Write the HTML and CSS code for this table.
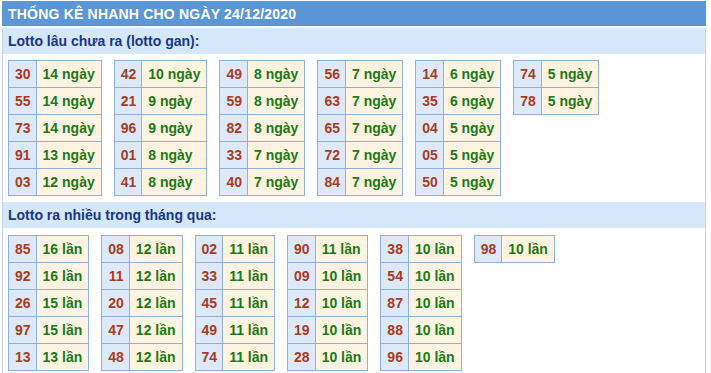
FILE: index.html
```html
<!DOCTYPE html>
<html lang="vi">
<head>
<meta charset="utf-8">
<title>Thống kê nhanh</title>
<link rel="stylesheet" href="styles.css">
</head>
<body>
<div class="wrap">
  <div class="title">THỐNG KÊ NHANH CHO NGÀY 24/12/2020</div>
  <div class="box">
    <div class="sec">Lotto lâu chưa ra (lotto gan):</div>
    <div class="grid">
      <table><tr><td class="n">30</td><td class="d">14 ngày</td></tr><tr><td class="n">55</td><td class="d">14 ngày</td></tr><tr><td class="n">73</td><td class="d">14 ngày</td></tr><tr><td class="n">91</td><td class="d">13 ngày</td></tr><tr><td class="n">03</td><td class="d">12 ngày</td></tr></table>
      <table><tr><td class="n">42</td><td class="d">10 ngày</td></tr><tr><td class="n">21</td><td class="d">9 ngày</td></tr><tr><td class="n">96</td><td class="d">9 ngày</td></tr><tr><td class="n">01</td><td class="d">8 ngày</td></tr><tr><td class="n">41</td><td class="d">8 ngày</td></tr></table>
      <table><tr><td class="n">49</td><td class="d">8 ngày</td></tr><tr><td class="n">59</td><td class="d">8 ngày</td></tr><tr><td class="n">82</td><td class="d">8 ngày</td></tr><tr><td class="n">33</td><td class="d">7 ngày</td></tr><tr><td class="n">40</td><td class="d">7 ngày</td></tr></table>
      <table><tr><td class="n">56</td><td class="d">7 ngày</td></tr><tr><td class="n">63</td><td class="d">7 ngày</td></tr><tr><td class="n">65</td><td class="d">7 ngày</td></tr><tr><td class="n">72</td><td class="d">7 ngày</td></tr><tr><td class="n">84</td><td class="d">7 ngày</td></tr></table>
      <table><tr><td class="n">14</td><td class="d">6 ngày</td></tr><tr><td class="n">35</td><td class="d">6 ngày</td></tr><tr><td class="n">04</td><td class="d">5 ngày</td></tr><tr><td class="n">05</td><td class="d">5 ngày</td></tr><tr><td class="n">50</td><td class="d">5 ngày</td></tr></table>
      <table><tr><td class="n">74</td><td class="d">5 ngày</td></tr><tr><td class="n">78</td><td class="d">5 ngày</td></tr></table>
    </div>
    <div class="sec">Lotto ra nhiều trong tháng qua:</div>
    <div class="grid grid2">
      <table><tr><td class="n">85</td><td class="d">16 lần</td></tr><tr><td class="n">92</td><td class="d">16 lần</td></tr><tr><td class="n">26</td><td class="d">15 lần</td></tr><tr><td class="n">97</td><td class="d">15 lần</td></tr><tr><td class="n">13</td><td class="d">13 lần</td></tr></table>
      <table><tr><td class="n">08</td><td class="d">12 lần</td></tr><tr><td class="n">11</td><td class="d">12 lần</td></tr><tr><td class="n">20</td><td class="d">12 lần</td></tr><tr><td class="n">47</td><td class="d">12 lần</td></tr><tr><td class="n">48</td><td class="d">12 lần</td></tr></table>
      <table><tr><td class="n">02</td><td class="d">11 lần</td></tr><tr><td class="n">33</td><td class="d">11 lần</td></tr><tr><td class="n">45</td><td class="d">11 lần</td></tr><tr><td class="n">49</td><td class="d">11 lần</td></tr><tr><td class="n">74</td><td class="d">11 lần</td></tr></table>
      <table><tr><td class="n">90</td><td class="d">11 lần</td></tr><tr><td class="n">09</td><td class="d">10 lần</td></tr><tr><td class="n">12</td><td class="d">10 lần</td></tr><tr><td class="n">19</td><td class="d">10 lần</td></tr><tr><td class="n">28</td><td class="d">10 lần</td></tr></table>
      <table><tr><td class="n">38</td><td class="d">10 lần</td></tr><tr><td class="n">54</td><td class="d">10 lần</td></tr><tr><td class="n">87</td><td class="d">10 lần</td></tr><tr><td class="n">88</td><td class="d">10 lần</td></tr><tr><td class="n">96</td><td class="d">10 lần</td></tr></table>
      <table><tr><td class="n">98</td><td class="d">10 lần</td></tr></table>
    </div>
  </div>
</div>
</body>
</html>
```
FILE: styles.css
```css
html, body {
  margin: 0;
  padding: 0;
  background: #ffffff;
  font-family: "Liberation Sans", Arial, sans-serif;
}
.wrap {
  margin: 1px 0 0 2px;
  width: 704px;
}
.title {
  background: #5b96d6;
  color: #ffffff;
  font-size: 14px;
  font-weight: bold;
  letter-spacing: 0.2px;
  height: 25px;
  line-height: 26px;
  padding-left: 6px;
}
.box {
  margin-top: 2px;
  border-left: 1px solid #c7d3e1;
  border-right: 1px solid #c7d3e1;
}
.sec {
  background: #d5e7fa;
  color: #17368c;
  font-size: 14px;
  font-weight: bold;
  height: 26px;
  line-height: 26px;
  padding-left: 5px;
}
.grid {
  display: flex;
  align-items: flex-start;
  gap: 12px;
  padding: 6px 5px;
}
.grid2 {
  padding-top: 7px;
  padding-bottom: 3px;
}
table {
  border-collapse: collapse;
  border: 1px solid #8eb0df;
}
td {
  border: 1px solid #8eb0df;
  font-size: 14px;
  font-weight: bold;
  height: 27px;
  padding: 0 6px;
  line-height: 16px;
  box-sizing: border-box;
  white-space: nowrap;
}
td.n {
  background: #dde9f9;
  color: #a93c1f;
  text-align: center;
  padding: 0 5px 0 6px;
}
td.d {
  background: #fff4e2;
  color: #1b7a16;
}
```
